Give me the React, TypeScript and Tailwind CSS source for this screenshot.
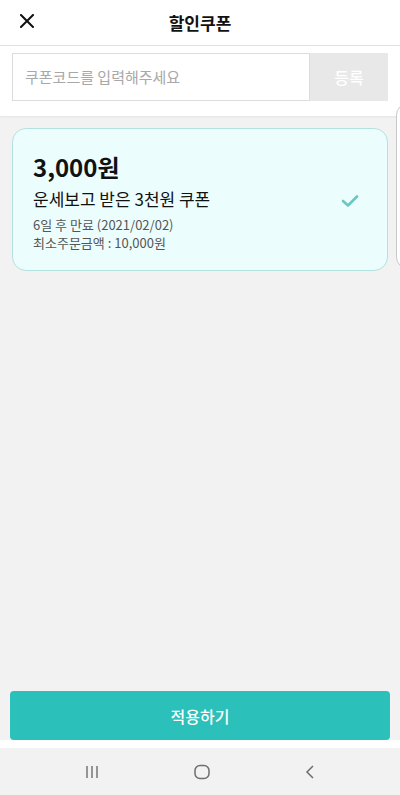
export default function App() {
  const font = { fontFamily: '"Noto Sans CJK KR", "Noto Sans", sans-serif' };

  return (
    <main style={font} className="relative flex h-[795px] w-[400px] flex-col overflow-hidden bg-[#f2f2f2] text-[#111]">
      <header className="relative flex h-[46px] shrink-0 items-center justify-center border-b border-[#e2e2e2] bg-white">
        <button className="absolute left-[18px] top-[12px] p-[2px]">
          <svg width="14" height="14" viewBox="0 0 14 14" stroke="#111" strokeWidth="2" strokeLinecap="square">
            <path d="M1 1L13 13M13 1L1 13" />
          </svg>
        </button>
        <h1 className="text-[17px] font-bold">할인쿠폰</h1>
      </header>

      <section className="flex shrink-0 bg-white px-3 pb-[15px] pt-[7px] shadow-[0_1px_2px_rgba(0,0,0,0.06)]">
        <div className="flex h-[48px] flex-1 items-center border border-[#dcdcdc] px-[12px] text-[15px] text-[#a8a8a8]">
          쿠폰코드를 입력해주세요
        </div>
        <button className="h-[48px] w-[78px] bg-[#e8e8e8] text-[16px] font-medium text-white">등록</button>
      </section>

      <section className="flex-1 px-3 pt-3">
        <div className="flex h-[143px] items-center rounded-[14px] border border-[#b3e2de] bg-[#ecfdfd] pl-[20px] pr-[28px]">
          <div className="flex-1 pt-[4px]">
            <p className="text-[24px] font-bold leading-[30px]">3,000원</p>
            <p className="mt-[5px] text-[17px] leading-[24px]">운세보고 받은 3천원 쿠폰</p>
            <p className="mt-[5px] text-[13px] leading-[18px] text-[#555]">6일 후 만료 (2021/02/02)</p>
            <p className="text-[13px] leading-[18px] text-[#555]">최소주문금액 : 10,000원</p>
          </div>
          <svg width="18" height="14" viewBox="0 0 18 14" fill="none" stroke="#6ac8c2" strokeWidth="2.6" strokeLinecap="round" strokeLinejoin="round" className="mt-[2px]">
            <path d="M2 7L7 11.5L16 2.5" />
          </svg>
        </div>
      </section>

      <div className="absolute left-[396px] top-[103px] h-[166px] w-[40px] rounded-[12px] border border-[#c8c8c8] bg-white" />

      <div className="shrink-0 px-[10px]">
        <button className="h-[49px] w-full rounded-[4px] bg-[#2bc0b9] text-[16px] font-medium text-white">적용하기</button>
      </div>
      <div className="h-[8px] shrink-0 bg-white" />

      <nav className="flex h-[47px] shrink-0 items-center justify-around bg-[#f2f2f2] px-[38px]">
        <svg width="16" height="16" viewBox="0 0 16 16" stroke="#6e6e6e" strokeWidth="1.4">
          <path d="M3 2V14M8 2V14M13 2V14" />
        </svg>
        <svg width="18" height="18" viewBox="0 0 18 18" fill="none" stroke="#6e6e6e" strokeWidth="1.5">
          <rect x="2" y="2.5" width="14" height="13" rx="5" />
        </svg>
        <svg width="12" height="16" viewBox="0 0 12 16" fill="none" stroke="#6e6e6e" strokeWidth="1.5">
          <path d="M9 2L3 8L9 14" />
        </svg>
      </nav>
    </main>
  );
}
